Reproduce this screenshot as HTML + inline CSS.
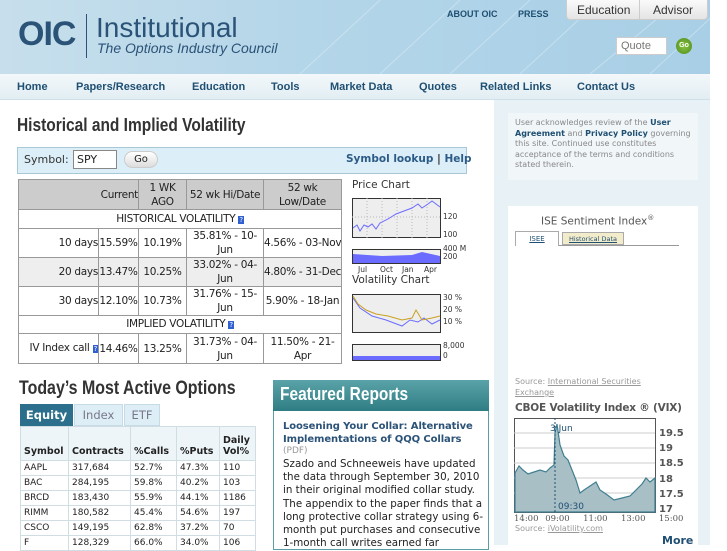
<!DOCTYPE html>
<html><head><meta charset="utf-8"><style>
*{margin:0;padding:0;box-sizing:border-box}
body{width:727px;height:545px;overflow:hidden;background:#fff;font-family:"DejaVu Sans","Liberation Sans",sans-serif;position:relative;color:#222}
.a{position:absolute}
.hdr{left:0;top:0;width:710px;height:74px;background:linear-gradient(90deg,#c7dfec 0%,#b5d6e9 40%,#a8cfe6 100%)}
.nav{left:0;top:74px;width:710px;height:26px;background:linear-gradient(#f3f8fa,#e2eef3);border-bottom:1px solid #cfe0e8;font-family:"Liberation Sans",sans-serif;font-weight:bold;font-size:11px;color:#1f4f72}
.nav span{position:absolute;top:7px}
table{border-collapse:collapse;table-layout:fixed}
.vt td{border:1px solid #999;font-size:10.5px;letter-spacing:-0.3px;text-align:center;line-height:14px;white-space:nowrap;overflow:hidden}
.mt td{border:1px solid #d0dde3;font-size:9px;padding-left:3px;height:15px;color:#222;white-space:nowrap}
.q{background:#3060d0;color:#fff;font-size:7px;padding:0 1px}
</style></head><body>
<div class="a hdr"></div>
<svg class="a" style="left:0;top:0" width="710" height="74"><g stroke="#d8eaf4" stroke-width="1" opacity=".6"><line x1="300" y1="74" x2="380" y2="0"/><line x1="380" y1="74" x2="460" y2="0"/><line x1="450" y1="74" x2="530" y2="0"/><line x1="520" y1="74" x2="600" y2="0"/><line x1="590" y1="74" x2="680" y2="0"/><line x1="650" y1="74" x2="730" y2="0"/></g></svg>
<div class="a" style="left:18px;top:15px;font:bold 34px 'Liberation Sans',sans-serif;color:#2b5277;letter-spacing:-1px">OIC</div>
<div class="a" style="left:86px;top:14px;width:1px;height:44px;background:#2b5277"></div>
<div class="a" style="left:96px;top:12px;font:28px 'Liberation Sans',sans-serif;color:#2b5277">Institutional</div>
<div class="a" style="left:97px;top:40px;font:italic 14px 'Liberation Sans',sans-serif;color:#2b5277">The Options Industry Council</div>
<div class="a" style="left:447px;top:9px;font:bold 9px 'Liberation Sans',sans-serif;color:#1f4f72">ABOUT OIC</div>
<div class="a" style="left:518px;top:9px;font:bold 9px 'Liberation Sans',sans-serif;color:#1f4f72">PRESS</div>
<div class="a" style="left:566px;top:0;width:142px;height:20px;background:linear-gradient(#fafafa,#e4e4e4);border-radius:0 0 4px 4px;border:1px solid #ccc;border-top:0;font:12px 'Liberation Sans',sans-serif;color:#333"><span class="a" style="left:10px;top:3px">Education</span><span class="a" style="left:72px;top:0;width:1px;height:20px;background:#ccc"></span><span class="a" style="left:86px;top:3px">Advisor</span></div>
<div class="a" style="left:616px;top:37px;width:51px;height:18px;background:#fff;border:1px solid #ccc;font:11px 'Liberation Sans',sans-serif;color:#777;padding:2px 4px">Quote</div>
<div class="a" style="left:676px;top:38px;width:16px;height:16px;border-radius:50%;background:radial-gradient(#8ac43f,#4d8a1f);font:bold 7px sans-serif;color:#fff;text-align:center;line-height:16px">Go</div>
<div class="a nav"><span style="left:17px">Home</span><span style="left:76px">Papers/Research</span><span style="left:192px">Education</span><span style="left:271px">Tools</span><span style="left:330px">Market Data</span><span style="left:419px">Quotes</span><span style="left:480px">Related Links</span><span style="left:577px">Contact Us</span></div>

<div class="a" style="left:494px;top:100px;width:216px;height:445px;background:#e8f1f5"></div>
<div class="a" style="left:508px;top:113px;width:190px;height:67px;background:#f1f6f9;font-size:8px;line-height:10.5px;color:#888;padding:5px 7px">User acknowledges review of the <b style="color:#1f4f72">User Agreement</b> and <b style="color:#1f4f72">Privacy Policy</b> governing this site. Continued use constitutes acceptance of the terms and conditions stated therein.</div>
<div class="a" style="left:508px;top:206px;width:190px;height:339px;background:#fff"></div>
<div class="a" style="left:541px;top:214px;font-size:10.5px;color:#555">ISE Sentiment Index<sup style="font-size:7px">®</sup></div>
<div class="a" style="left:515px;top:245px;width:164px;height:1px;background:#999"></div>
<div class="a" style="left:515px;top:231px;width:44px;height:15px;background:#fff;border:1px solid #aaa;border-bottom:0;font-size:7px;color:#1f4f72;text-align:center;line-height:14px;text-decoration:underline">ISEE</div>
<div class="a" style="left:562px;top:232px;width:62px;height:13px;background:#f3eccb;border:1px solid #aaa;font-size:6.5px;color:#1f4f72;text-align:center;line-height:12px;text-decoration:underline">Historical Data</div>
<div class="a" style="left:515px;top:376px;font-size:8px;line-height:11px;color:#999">Source: <u>International Securities<br>Exchange</u></div>
<div class="a" style="left:515px;top:402px;font-size:10.5px;font-weight:bold;color:#555;letter-spacing:-0.2px">CBOE Volatility Index ® (VIX)</div>
<svg class="a" style="left:514px;top:418px" width="190" height="100">
<rect x="0.5" y="0.5" width="141" height="94" fill="#fff" stroke="#555"/>
<g stroke="#ccc"><line x1="0" y1="15" x2="141" y2="15"/><line x1="0" y1="30" x2="141" y2="30"/><line x1="0" y1="45" x2="141" y2="45"/><line x1="0" y1="60" x2="141" y2="60"/><line x1="0" y1="75" x2="141" y2="75"/></g>
<path d="M1,94 L1,55 L5,48 L9,52 L14,56 L20,54 L26,52 L32,54 L36,50 L40,47 L41,15 L43,6 L46,27 L50,38 L54,42 L58,52 L62,62 L66,75 L70,72 L76,68 L82,64 L86,72 L92,76 L100,82 L108,80 L116,78 L122,72 L128,66 L132,60 L136,64 L141,60 L141,94 Z" fill="#a9bfc6" stroke="#3f7f90" stroke-width="1.2"/>
<line x1="41" y1="0" x2="41" y2="94" stroke="#1f4f72" stroke-dasharray="2,2"/>
<text x="36" y="13" font-size="9" fill="#1f4f72" font-family="DejaVu Sans">3 Jun</text>
<text x="44" y="91" font-size="9" fill="#1f4f72" font-family="DejaVu Sans">09:30</text>
<g font-size="10" font-weight="bold" fill="#555" font-family="DejaVu Sans"><text x="145" y="18">19.5</text><text x="145" y="33">19</text><text x="145" y="48">18.5</text><text x="145" y="64">18</text><text x="145" y="79">17.5</text><text x="145" y="94">17</text></g>
</svg>
<div class="a" style="left:514px;top:514px;font:8.5px 'DejaVu Serif',serif;color:#555;word-spacing:4px">14:00 09:00 &nbsp;11:00 &nbsp;13:00 &nbsp;15:00</div>
<div class="a" style="left:515px;top:524px;font-size:8px;color:#999">Source: <u>iVolatility.com</u></div>
<div class="a" style="left:662px;top:534px;font-size:11px;font-weight:bold;color:#1f4f72">More</div>

<div class="a" style="left:17px;top:115px;font:bold 18px 'Liberation Sans',sans-serif;color:#333;transform:scaleX(0.86);transform-origin:left;white-space:nowrap">Historical and Implied Volatility</div>
<div class="a" style="left:17px;top:147px;width:450px;height:27px;background:#dceef8;border:1px solid #a9c8d6"></div>
<div class="a" style="left:24px;top:153px;font-size:11px;color:#333">Symbol:</div>
<div class="a" style="left:73px;top:150px;width:44px;height:19px;background:#fff;border:1px solid #888;font-size:11px;padding:2px 3px">SPY</div>
<div class="a" style="left:124px;top:151px;width:34px;height:17px;background:linear-gradient(#fff,#ddd);border-radius:9px;border:1px solid #ccc;font-size:10px;text-align:center;line-height:15px">Go</div>
<div class="a" style="left:346px;top:153px;font-size:10.5px;font-weight:bold;color:#2b5b86">Symbol lookup <span style="color:#333">|</span> Help</div>

<table class="a vt" style="left:18px;top:179px;width:323px">
<colgroup><col style="width:80px"><col style="width:40px"><col style="width:48px"><col style="width:77px"><col style="width:78px"></colgroup>
<tr style="background:#ccc;height:30px"><td style="border-right:0"></td><td style="border-left:0;text-align:right">Current</td><td>1 WK<br>AGO</td><td>52 wk Hi/Date</td><td>52 wk<br>Low/Date</td></tr>
<tr style="height:19px"><td colspan="5">HISTORICAL VOLATILITY <span class="q">?</span></td></tr>
<tr style="height:29px"><td style="text-align:right">10 days</td><td>15.59%</td><td>10.19%</td><td>35.81% - 10-<br>Jun</td><td>4.56% - 03-Nov</td></tr>
<tr style="height:29px;background:#eee"><td style="text-align:right">20 days</td><td>13.47%</td><td>10.25%</td><td>33.02% - 04-<br>Jun</td><td>4.80% - 31-Dec</td></tr>
<tr style="height:29px"><td style="text-align:right">30 days</td><td>12.10%</td><td>10.73%</td><td>31.76% - 15-<br>Jun</td><td>5.90% - 18-Jan</td></tr>
<tr style="height:18px"><td colspan="5">IMPLIED VOLATILITY <span class="q">?</span></td></tr>
<tr style="height:30px"><td style="text-align:right">IV Index call <span class="q">?</span></td><td>14.46%</td><td>13.25%</td><td>31.73% - 04-<br>Jun</td><td>11.50% - 21-<br>Apr</td></tr>
</table>

<div class="a" style="left:352px;top:179px;font-size:10.5px;color:#333">Price Chart</div>
<svg class="a" style="left:352px;top:198px" width="120" height="165" font-family="DejaVu Sans" font-size="7.5" fill="#333">
<rect x="0.5" y="0.5" width="88" height="39" fill="#eee" stroke="#333"/>
<g stroke="#bbb" stroke-dasharray="1,2"><line x1="0" y1="19" x2="88" y2="19"/><line x1="15" y1="0" x2="15" y2="40"/><line x1="30" y1="0" x2="30" y2="40"/><line x1="45" y1="0" x2="45" y2="40"/><line x1="60" y1="0" x2="60" y2="40"/><line x1="75" y1="0" x2="75" y2="40"/></g>
<polyline points="1,30 5,27 8,33 12,27 16,29 20,26 24,31 28,25 36,21 44,16 52,13 60,10 66,6 70,10 76,6 80,3 84,6 88,9" fill="none" stroke="#6b6bff"/>
<text x="91" y="21">120</text><text x="91" y="39">100</text>
<rect x="0.5" y="51.5" width="88" height="14" fill="#eee" stroke="#333"/>
<path d="M1,65 L1,56 L30,58 L60,57 L70,54 L88,58 L88,65Z" fill="#6b6bff"/>
<text x="91" y="53">400 M</text><text x="91" y="61">200</text>
<text x="6" y="74">Jul</text><text x="28" y="74">Oct</text><text x="50" y="74">Jan</text><text x="72" y="74">Apr</text>
<rect x="0.5" y="96.5" width="88" height="38" fill="#eee" stroke="#333"/>
<polyline points="1,100 8,110 20,118 34,122 50,128 58,122 66,124 72,120 80,126 88,122" fill="none" stroke="#6b6bff"/>
<polyline points="1,98 6,106 14,112 24,116 36,118 50,122 60,120 64,112 70,122 80,120 88,118" fill="none" stroke="#c9a020"/>
<text x="91" y="102">30 %</text><text x="91" y="114">20 %</text><text x="91" y="126">10 %</text>
<rect x="0.5" y="146.5" width="88" height="16" fill="#eee" stroke="#333"/>
<path d="M1,162 L1,158 L88,158 L88,162Z" fill="#6b6bff"/>
<text x="91" y="150">8,000</text><text x="91" y="160">0</text>
</svg>
<div class="a" style="left:352px;top:274px;font-size:10.5px;color:#333">Volatility Chart</div>

<div class="a" style="left:19px;top:378px;font:bold 19px 'Liberation Sans',sans-serif;color:#333;transform:scaleX(0.84);transform-origin:left;white-space:nowrap">Today’s Most Active Options</div>
<div class="a" style="left:20px;top:404px;width:53px;height:22px;background:#2b6f8c;color:#fff;font-size:11.5px;font-weight:bold;text-align:center;line-height:22px">Equity</div>
<div class="a" style="left:74px;top:404px;width:49px;height:22px;background:#ddeef7;color:#778;font-size:11.5px;text-align:center;line-height:20px;border:1px solid #c6dbe5">Index</div>
<div class="a" style="left:124px;top:404px;width:36px;height:22px;background:#ddeef7;color:#778;font-size:11.5px;text-align:center;line-height:20px;border:1px solid #c6dbe5">ETF</div>
<table class="a mt" style="left:20px;top:426px;width:235px">
<colgroup><col style="width:48px"><col style="width:62px"><col style="width:46px"><col style="width:43px"><col style="width:36px"></colgroup>
<tr style="background:#eef5f8;height:34px"><td style="font-size:9.5px;vertical-align:bottom;padding-bottom:3px;font-weight:bold">Symbol</td><td style="font-size:9.5px;vertical-align:bottom;padding-bottom:3px;font-weight:bold">Contracts</td><td style="font-size:9.5px;vertical-align:bottom;padding-bottom:3px;font-weight:bold">%Calls</td><td style="font-size:9.5px;vertical-align:bottom;padding-bottom:3px;font-weight:bold">%Puts</td><td style="font-size:9.5px;vertical-align:bottom;padding-bottom:3px;font-weight:bold">Daily<br>Vol%</td></tr>
<tr><td>AAPL</td><td>317,684</td><td>52.7%</td><td>47.3%</td><td>110</td></tr>
<tr><td>BAC</td><td>284,195</td><td>59.8%</td><td>40.2%</td><td>103</td></tr>
<tr><td>BRCD</td><td>183,430</td><td>55.9%</td><td>44.1%</td><td>1186</td></tr>
<tr><td>RIMM</td><td>180,582</td><td>45.4%</td><td>54.6%</td><td>197</td></tr>
<tr><td>CSCO</td><td>149,195</td><td>62.8%</td><td>37.2%</td><td>70</td></tr>
<tr><td>F</td><td>128,329</td><td>66.0%</td><td>34.0%</td><td>106</td></tr>
</table>

<div class="a" style="left:273px;top:380px;width:216px;height:170px;border:1px solid #5a9ea6;background:#fff"></div>
<div class="a" style="left:273px;top:380px;width:216px;height:31px;background:linear-gradient(#5aa3a8,#2f7d84)"></div>
<div class="a" style="left:280px;top:384px;color:#fff;font:bold 18px 'Liberation Sans',sans-serif;transform:scaleX(0.86);transform-origin:left;white-space:nowrap">Featured Reports</div>
<div class="a" style="left:283px;top:420px;width:205px;font-size:10px;line-height:13px;font-weight:bold;color:#2b5277;letter-spacing:-0.1px">Loosening Your Collar: Alternative Implementations of QQQ Collars</div>
<div class="a" style="left:283px;top:446px;font-size:9px;color:#999">(PDF)</div>
<div class="a" style="left:283px;top:458px;width:206px;font-size:10.3px;line-height:13.2px;color:#222">Szado and Schneeweis have updated the data through September 30, 2010 in their original modified collar study. The appendix to the paper finds that a long protective collar strategy using 6-month put purchases and consecutive 1-month call writes earned far</div>
</body></html>
